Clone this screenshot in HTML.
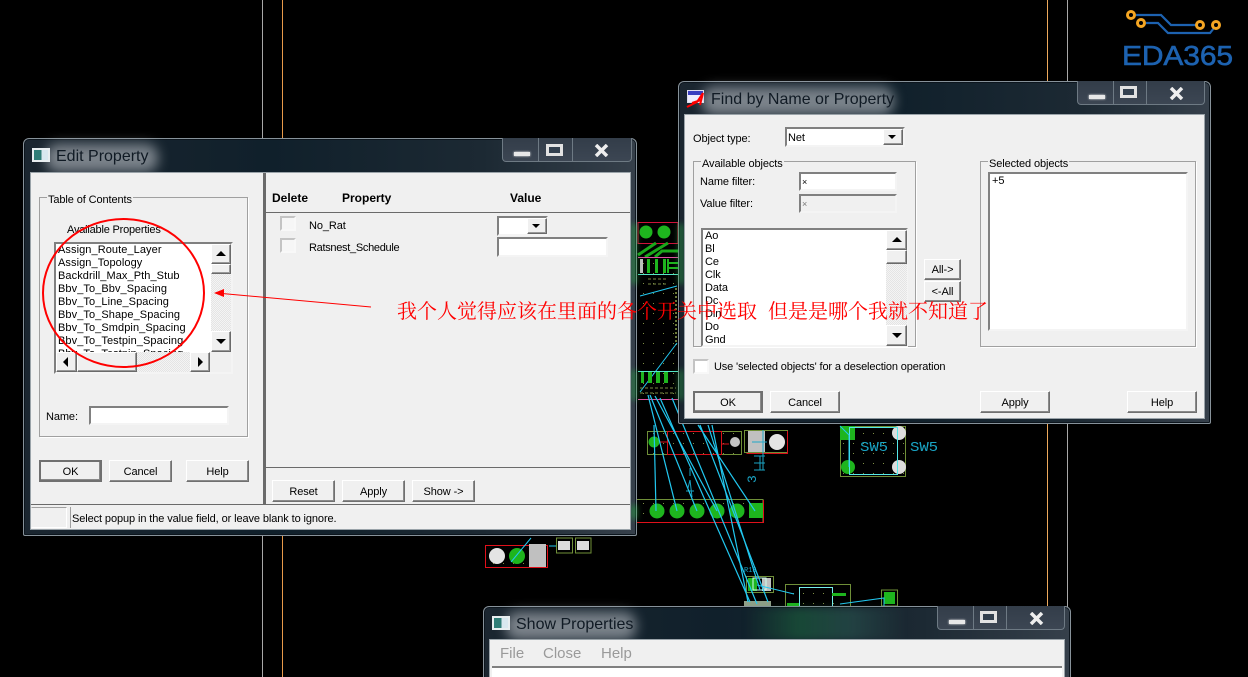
<!DOCTYPE html>
<html><head><meta charset="utf-8">
<style>
html,body{margin:0;padding:0;background:#000;width:1248px;height:677px;overflow:hidden}
#r{position:relative;width:1248px;height:677px;overflow:hidden;background:#000;font:11px/13px "Liberation Sans",sans-serif;color:#000;letter-spacing:-.1px}
#r div,#r svg{position:absolute;box-sizing:border-box}
.t{white-space:nowrap;height:13px;margin-top:1px}
.win{border:1px solid #87929a;border-radius:6px 6px 2px 2px;background:linear-gradient(90deg,#1b2630,#10202b 40%,#1c2933 75%,#36404b);box-shadow:inset 0 0 0 1px #0c151d}
.client{background:#f0f0f0;outline:1px solid #9aa3a9;box-shadow:0 0 0 1px #222b33}
.tb{border:1px solid #6e7a84;border-top:0;border-radius:0 0 4px 4px;background:linear-gradient(#333d49,#3c4653)}
.sep{width:1px;background:#6e7a84;top:0;bottom:0}
.mn{background:#e8e8e8;height:4px;box-shadow:0 0 2px #fff}
.mx{border:3px solid #e2e2e2;background:#33404e}
.glow{background:rgba(205,210,215,.55);filter:blur(6px);border-radius:12px}
.title{font:16px/20px "Liberation Sans",sans-serif;color:#101a24;white-space:nowrap;letter-spacing:0}
.ic{width:18px;height:14px;background:linear-gradient(90deg,#2f7d77 0 55%,#d8e8ef 55%);border:2px solid #e8eef0}
.btn{background:#f0f0f0;border:1px solid;border-color:#fff #707070 #707070 #fff;box-shadow:inset -1px -1px 0 #8a8a8a;text-align:center;line-height:22px;white-space:nowrap}
.dft{border:2px solid #707070;line-height:20px}
.ins{background:#fff;border:2px solid;border-color:#808080 #f4f4f4 #f4f4f4 #808080}
.chk{background:#fff;border:2px solid;border-color:#c4c4c4 #f8f8f8 #f8f8f8 #c4c4c4}
.grp{border:1px solid #a0a0a0;box-shadow:1px 1px 0 #fff}
.lab{background:#f0f0f0;padding:0 1px}
.sb{background:#f0f0f0;border:1px solid;border-color:#fff #6a6a6a #6a6a6a #fff;box-shadow:inset -1px -1px 0 #999}
.tr{background:repeating-conic-gradient(#f4f4f4 0 25%,#e4e4e4 0 50%) 0 0/2px 2px}
.up{width:0;height:0;border:5px solid transparent;border-top:0;border-bottom:5px solid #000}
.dn{width:0;height:0;border:5px solid transparent;border-bottom:0;border-top:5px solid #000}
.lf{width:0;height:0;border:5px solid transparent;border-left:0;border-right:5px solid #000}
.rt{width:0;height:0;border:5px solid transparent;border-right:0;border-left:5px solid #000}
.b{font-weight:bold;font-size:12px;margin-top:0;letter-spacing:0}
.m{font-size:15px;line-height:17px;height:17px;color:#9a9a9a;margin-top:0;letter-spacing:0}
.cn{font:20px/24px "Noto Serif CJK SC","Noto Sans CJK SC",serif;color:#f00;white-space:nowrap;letter-spacing:0}
.gl{filter:blur(3px)}
</style></head><body><div id="r">

<svg width="1248" height="677" style="left:0;top:0" viewBox="0 0 1248 677">
<defs><pattern id="d" width="10" height="10" patternUnits="userSpaceOnUse"><rect x="3" y="3" width="1" height="1" fill="#7f8f44"/></pattern></defs>
<g fill="none" stroke-width="1">
<path d="M262.5 0V677M1067.5 0V677" stroke="#a8a8a8"/>
<path d="M282.5 0V677" stroke="#e89a4a"/><path d="M1047.5 0V677" stroke="#eda95c"/>
</g>
<!-- logo -->
<g fill="none" stroke="#1d62b0" stroke-width="2.200">
<path d="M1136 15H1161L1171 25H1196"/><path d="M1146 23H1158L1168 33H1210L1214 28"/>
</g>
<g fill="#000" stroke="#f5a623" stroke-width="3">
<circle cx="1131" cy="15" r="3.500"/><circle cx="1141" cy="23" r="3.500"/><circle cx="1200" cy="25" r="3.500"/><circle cx="1216" cy="25" r="3.500"/>
</g>
<text x="1122" y="65" font-family="Liberation Sans" font-size="28" fill="#1d62b0" stroke="#1d62b0" stroke-width=".6" textLength="111" lengthAdjust="spacingAndGlyphs">EDA365</text>

<!-- strip -->
<rect x="638" y="262" width="40" height="135" fill="url(#d)"/>
<rect x="638" y="222.500" width="40" height="21" fill="none" stroke="#d0103a"/>
<circle cx="646" cy="232" r="6.500" fill="#1eb51e"/><circle cx="664" cy="232" r="6.500" fill="#1eb51e"/>
<path d="M638 255L656 243M645 257L668 243M655 257L662 251H678" stroke="#1aa81a" stroke-width="3" fill="none"/>
<path d="M638 257.500H678" stroke="#e050a0"/>
<rect x="640" y="259" width="3" height="14" fill="#c0c0c0"/>
<rect x="647" y="259" width="3" height="14" fill="#1eb51e"/><rect x="655" y="259" width="3" height="14" fill="#1eb51e"/><rect x="663" y="259" width="3" height="14" fill="#1eb51e"/><path d="M668 259V273M668 263H678M668 268H678" stroke="#1eb51e" stroke-width="2"/>
<path d="M638 274.500H678" stroke="#55e8c8"/>
<path d="M648 279H668M648 284H668" stroke="#7a8a44" stroke-dasharray="3 2"/>
<path d="M640 296L677 286" stroke="#22c8f0"/>
<path d="M676 288V345" stroke="#6a7a38" stroke-dasharray="2 2" stroke-width="2"/>
<path d="M677 343L640 392" stroke="#22c8f0"/>
<path d="M638 371.500H678" stroke="#55e8c8"/>
<g fill="#1eb51e"><rect x="641" y="372" width="3" height="11"/><rect x="648" y="372" width="4" height="11"/><rect x="656" y="372" width="4" height="11"/><rect x="664" y="372" width="4" height="11"/></g>
<path d="M640 388H676M640 393H676" stroke="#7a8a44" stroke-dasharray="3 2"/>
<path d="M638 399.500H678" stroke="#e050a0"/>

<!-- block A -->
<rect x="647.500" y="431.500" width="94" height="23" fill="url(#d)" stroke="#6f8f38"/>
<rect x="667.500" y="431.500" width="54" height="23" fill="none" stroke="#d8101a"/>
<circle cx="654" cy="442" r="5.500" fill="#1eb51e"/><circle cx="735" cy="442" r="5" fill="#c4c4c4"/>
<path d="M660 442H667M722 444H729" stroke="#d8101a"/>
<rect x="744.500" y="430.500" width="43" height="22" fill="none" stroke="#6f8f38"/><path d="M746.500 453.500H787.500V431" fill="none" stroke="#d8101a"/>
<rect x="748" y="431" width="17" height="21" fill="#c0c0c0"/><circle cx="777" cy="442" r="8" fill="#e4e4e4"/>
<path d="M752 442H767M763 430V470" stroke="#22a8c8"/>
<!-- bar -->
<rect x="630" y="499.500" width="133" height="23" fill="url(#d)" stroke="#6f8f38"/><path d="M630 522.500H763.500V500" fill="none" stroke="#e0101a"/>
<g fill="#1eb51e"><circle cx="657" cy="511" r="7.500"/><circle cx="677" cy="511" r="7.500"/><circle cx="697" cy="511" r="7.500"/><circle cx="717" cy="511" r="7.500"/><circle cx="737" cy="511" r="7.500"/><rect x="749" y="503" width="14" height="15"/></g>
<!-- left lower -->
<rect x="485.500" y="545.500" width="62" height="22" fill="url(#d)" stroke="#e0101a"/>
<circle cx="497" cy="556" r="8" fill="#e4e4e4"/><circle cx="517" cy="556" r="8" fill="#1eb51e"/><rect x="529" y="544" width="17" height="23" fill="#c0c0c0"/>
<rect x="556.500" y="538" width="16" height="15" fill="none" stroke="#6f8f38"/><rect x="575.500" y="538" width="15.500" height="15" fill="none" stroke="#6f8f38"/>
<rect x="558" y="541" width="12" height="9" fill="#ddd"/><rect x="577" y="541" width="12" height="9" fill="#ddd"/>
<path d="M511 562L531 538M549 546H556" stroke="#22c8f0"/>
<!-- SW5 -->
<rect x="840.500" y="426.500" width="65" height="50" fill="url(#d)" stroke="#6f8f38"/>
<rect x="840" y="426" width="15" height="14" fill="#1eb51e"/><circle cx="848" cy="467" r="7" fill="#1eb51e"/><circle cx="899" cy="433" r="7" fill="#ddd"/><circle cx="899" cy="467" r="7" fill="#ddd"/>
<rect x="849.500" y="427.500" width="48" height="47" fill="none" stroke="#55e8e8"/>
<path d="M840 426L849 435V467" stroke="#22c8f0" fill="none"/>
<text x="860" y="451" font-family="Liberation Mono" font-size="14" fill="#1aa4c4" textLength="28" lengthAdjust="spacingAndGlyphs">SW5</text>
<text x="910" y="451" font-family="Liberation Mono" font-size="14" fill="#1aa4c4" textLength="28" lengthAdjust="spacingAndGlyphs">SW5</text>
<text x="0" y="0" transform="translate(756,483) rotate(-90)" font-family="Liberation Mono" font-size="13" fill="#1aa4c4">3</text>
<path d="M754 456H765M754 463H765M754 470H765M760 456V470" stroke="#1aa4c4" fill="none"/>
<path d="M688 488L690 480M690 480L692 497M686 491H694M690 468V476" stroke="#1aa4c4" fill="none"/>
<!-- R13 etc -->
<text x="744" y="572" font-family="Liberation Mono" font-size="7" fill="#1aa4c4">R13</text>
<rect x="746.500" y="576.500" width="27" height="16" fill="none" stroke="#6f8f38"/><rect x="748" y="578" width="9" height="13" fill="#1eb51e"/><rect x="762" y="578" width="9" height="13" fill="#c0c0c0"/>
<rect x="753" y="578" width="13" height="12" fill="none" stroke="#cfe"/>
<rect x="785.500" y="584.500" width="65" height="22" fill="url(#d)" stroke="#6f8f38"/><rect x="799.500" y="587.500" width="33" height="19" fill="none" stroke="#7ee"/>
<rect x="832" y="593" width="14" height="3" fill="#1eb51e"/><rect x="787" y="603" width="12" height="3" fill="#1eb51e"/>
<rect x="881.500" y="590" width="16" height="16" fill="none" stroke="#6f8f38"/><rect x="884" y="592" width="11" height="12" fill="#1eb51e"/>
<path d="M757 585L794 594M840 604L884 598V606" stroke="#22c8f0" fill="none"/>
<rect x="744" y="601" width="27" height="5" fill="#8f9f88"/>
<!-- ratlines -->
<g stroke="#22c8f0" stroke-width="1.200" fill="none">
<path d="M654 425L656 511"/><path d="M648 395L677 511"/><path d="M650 395L697 511"/><path d="M655 396L717 511"/>
<path d="M660 398L750 602"/><path d="M672 398L757 604"/><path d="M700 425L768 602"/><path d="M708 425L760 590"/><path d="M712 425L748 602"/><path d="M698 425L755 511"/>
</g>
</svg>

<!-- EDIT PROPERTY -->
<div class="win" style="left:23px;top:138px;width:614px;height:398px"></div>
<div class="gl" style="left:631px;top:224px;width:6px;height:60px;background:rgba(40,170,70,.55)"></div>
<div class="gl" style="left:631px;top:370px;width:6px;height:30px;background:rgba(40,170,70,.5)"></div>
<div class="gl" style="left:631px;top:505px;width:6px;height:14px;background:rgba(40,170,70,.6)"></div>
<div class="glow" style="left:46px;top:144px;width:112px;height:28px"></div>
<div class="ic" style="left:32px;top:148px"></div>
<div class="title" style="left:56px;top:147px">Edit Property</div>
<div class="tb" style="left:502px;top:138px;width:130px;height:24px">
<div class="sep" style="left:35px"></div><div class="sep" style="left:69px"></div>
<div class="mn" style="left:11px;top:14px;width:16px"></div>
<div class="mx" style="left:43px;top:6px;width:17px;height:12px"></div>
<svg style="left:91px;top:6px" width="15" height="13" viewBox="0 0 15 13"><path d="M2 1L13 12M13 1L2 12" stroke="#eee" stroke-width="3.500" fill="none"/></svg>
</div>
<div class="client" style="left:31px;top:173px;width:599px;height:356px"></div>
<div style="left:263px;top:173px;width:3px;height:332px;background:#6a6a6a"></div>
<div style="left:266px;top:212px;width:364px;height:1px;background:#6a6a6a"></div>
<div style="left:265px;top:467px;width:365px;height:1px;background:#6a6a6a"></div>
<div style="left:31px;top:504px;width:599px;height:1px;background:#6a6a6a"></div>
<div style="left:31px;top:507px;width:36px;height:21px;border:1px solid;border-color:#a0a0a0 #fff #fff #f0f0f0"></div>
<div style="left:70px;top:507px;width:560px;height:21px;border-left:1px solid #a0a0a0"></div>
<div class="t" style="left:72px;top:512px">Select popup in the value field, or leave blank to ignore.</div>

<div class="grp" style="left:39px;top:197px;width:209px;height:240px"></div>
<div class="t lab" style="left:47px;top:193px">Table of Contents</div>
<div class="t" style="left:67px;top:223px;letter-spacing:-.2px">Available Properties</div>
<div class="ins" style="left:54px;top:242px;width:179px;height:132px"></div>
<div class="t" style="left:58px;top:243px;line-height:13px;height:110px;overflow:hidden;letter-spacing:.08px">Assign_Route_Layer<br>Assign_Topology<br>Backdrill_Max_Pth_Stub<br>Bbv_To_Bbv_Spacing<br>Bbv_To_Line_Spacing<br>Bbv_To_Shape_Spacing<br>Bbv_To_Smdpin_Spacing<br>Bbv_To_Testpin_Spacing<br>Bbv_To_Testpin_Spacing</div>
<div class="tr" style="left:211px;top:244px;width:20px;height:108px"></div>
<div class="sb" style="left:211px;top:244px;width:20px;height:20px"><div class="up" style="left:4px;top:6px"></div></div>
<div class="sb" style="left:211px;top:264px;width:20px;height:10px"></div>
<div class="sb" style="left:211px;top:331px;width:20px;height:21px"><div class="dn" style="left:4px;top:7px"></div></div>
<div class="tr" style="left:56px;top:352px;width:155px;height:20px"></div>
<div class="sb" style="left:56px;top:352px;width:21px;height:20px"><div class="lf" style="left:6px;top:4px"></div></div>
<div class="sb" style="left:77px;top:352px;width:60px;height:20px"></div>
<div class="sb" style="left:190px;top:352px;width:20px;height:20px"><div class="rt" style="left:7px;top:4px"></div></div>
<div style="left:210px;top:352px;width:21px;height:20px;background:#f0f0f0"></div>
<div class="t" style="left:46px;top:410px">Name:</div>
<div class="ins" style="left:89px;top:406px;width:140px;height:19px"></div>
<div class="btn dft" style="left:39px;top:460px;width:63px;height:22px">OK</div>
<div class="btn" style="left:109px;top:460px;width:63px;height:22px">Cancel</div>
<div class="btn" style="left:186px;top:460px;width:63px;height:22px">Help</div>
<div class="t b" style="left:272px;top:192px">Delete</div>
<div class="t b" style="left:342px;top:192px">Property</div>
<div class="t b" style="left:510px;top:192px">Value</div>
<div class="chk" style="left:280px;top:216px;width:16px;height:15px;background:#f6f6f6"></div>
<div class="chk" style="left:280px;top:238px;width:16px;height:15px;background:#f6f6f6"></div>
<div class="t" style="left:309px;top:219px">No_Rat</div>
<div class="t" style="left:309px;top:241px;letter-spacing:-.3px">Ratsnest_Schedule</div>
<div class="ins" style="left:497px;top:216px;width:51px;height:20px"></div>
<div class="sb" style="left:527px;top:218px;width:20px;height:16px"><div class="dn" style="left:4px;top:5px;border-width:4px;border-bottom:0;border-top:4px solid #000"></div></div>
<div class="ins" style="left:497px;top:237px;width:111px;height:20px"></div>
<div class="btn" style="left:272px;top:480px;width:63px;height:22px">Reset</div>
<div class="btn" style="left:342px;top:480px;width:63px;height:22px">Apply</div>
<div class="btn" style="left:412px;top:480px;width:63px;height:22px">Show -&gt;</div>

<!-- FIND -->
<div class="win" style="left:678px;top:81px;width:533px;height:343px"></div>
<div class="gl" style="left:678px;top:224px;width:6px;height:60px;background:rgba(40,170,70,.5)"></div>
<div class="gl" style="left:678px;top:370px;width:6px;height:30px;background:rgba(40,170,70,.45)"></div>
<div class="glow" style="left:702px;top:87px;width:192px;height:28px"></div>
<div style="left:687px;top:90px;width:17px;height:13px;background:linear-gradient(#3a3fc0 0 35%,#eef 35%);border:1px solid #dde"></div>
<svg style="left:686px;top:92px" width="20" height="16" viewBox="0 0 20 16"><path d="M1 15L11 10L17 1L14 13M6 11L15 8" stroke="#f00" stroke-width="2" fill="none"/></svg>
<div class="title" style="left:711px;top:90px">Find by Name or Property</div>
<div class="tb" style="left:1077px;top:81px;width:128px;height:24px">
<div class="sep" style="left:35px"></div><div class="sep" style="left:68px"></div>
<div class="mn" style="left:11px;top:14px;width:16px"></div>
<div class="mx" style="left:42px;top:5px;width:17px;height:12px"></div>
<svg style="left:91px;top:6px" width="15" height="13" viewBox="0 0 15 13"><path d="M2 1L13 12M13 1L2 12" stroke="#eee" stroke-width="3.500" fill="none"/></svg>
</div>
<div class="client" style="left:685px;top:115px;width:519px;height:303px"></div>
<div class="t" style="left:693px;top:132px">Object type:</div>
<div class="ins" style="left:785px;top:127px;width:120px;height:20px"></div>
<div class="t" style="left:788px;top:131px">Net</div>
<div class="sb" style="left:883px;top:129px;width:20px;height:16px"><div class="dn" style="left:4px;top:5px;border-width:4px;border-bottom:0;border-top:4px solid #000"></div></div>
<div class="grp" style="left:693px;top:161px;width:223px;height:186px"></div>
<div class="t lab" style="left:701px;top:157px">Available objects</div>
<div class="t" style="left:700px;top:175px">Name filter:</div>
<div class="ins" style="left:799px;top:172px;width:98px;height:19px"></div>
<div class="t" style="left:802px;top:175px;font-size:9px">×</div>
<div class="t" style="left:700px;top:197px">Value filter:</div>
<div class="ins" style="left:799px;top:194px;width:98px;height:19px;background:#f0f0f0"></div>
<div class="t" style="left:802px;top:197px;font-size:9px;color:#777">×</div>
<div class="ins" style="left:701px;top:228px;width:207px;height:119px"></div>
<div class="t" style="left:705px;top:229px;height:116px;overflow:hidden">Ao<br>Bl<br>Ce<br>Clk<br>Data<br>Dc<br>Din<br>Do<br>Gnd</div>
<div class="tr" style="left:886px;top:230px;width:21px;height:116px"></div>
<div class="sb" style="left:886px;top:230px;width:21px;height:20px"><div class="up" style="left:5px;top:6px"></div></div>
<div class="sb" style="left:886px;top:250px;width:21px;height:14px"></div>
<div class="sb" style="left:886px;top:325px;width:21px;height:21px"><div class="dn" style="left:5px;top:7px"></div></div>
<div class="btn" style="left:924px;top:259px;width:37px;height:21px;line-height:21px">All-&gt;</div>
<div class="btn" style="left:924px;top:281px;width:37px;height:21px;line-height:21px">&lt;-All</div>
<div class="grp" style="left:980px;top:161px;width:216px;height:186px"></div>
<div class="t lab" style="left:988px;top:157px">Selected objects</div>
<div class="ins" style="left:988px;top:172px;width:200px;height:159px"></div>
<div class="t" style="left:992px;top:174px">+5</div>
<div class="chk" style="left:693px;top:359px;width:16px;height:15px"></div>
<div class="t" style="left:714px;top:360px;letter-spacing:-.14px">Use 'selected objects' for a deselection operation</div>
<div class="btn dft" style="left:693px;top:391px;width:70px;height:22px">OK</div>
<div class="btn" style="left:770px;top:391px;width:70px;height:22px">Cancel</div>
<div class="btn" style="left:980px;top:391px;width:70px;height:22px">Apply</div>
<div class="btn" style="left:1127px;top:391px;width:70px;height:22px">Help</div>

<!-- SHOW PROPERTIES -->
<div class="win" style="left:483px;top:606px;width:588px;height:80px"></div>
<div style="left:745px;top:608px;width:160px;height:32px;background:linear-gradient(90deg,transparent,rgba(30,140,70,.35),rgba(60,130,110,.3),transparent);filter:blur(4px)"></div>
<div class="glow" style="left:506px;top:612px;width:130px;height:28px"></div>
<div class="ic" style="left:492px;top:616px"></div>
<div class="title" style="left:516px;top:615px">Show Properties</div>
<div class="tb" style="left:937px;top:606px;width:128px;height:24px">
<div class="sep" style="left:35px"></div><div class="sep" style="left:68px"></div>
<div class="mn" style="left:11px;top:14px;width:16px"></div>
<div class="mx" style="left:42px;top:5px;width:17px;height:12px"></div>
<svg style="left:91px;top:6px" width="15" height="13" viewBox="0 0 15 13"><path d="M2 1L13 12M13 1L2 12" stroke="#eee" stroke-width="3.500" fill="none"/></svg>
</div>
<div class="client" style="left:490px;top:640px;width:574px;height:40px"></div>
<div style="left:492px;top:666px;width:570px;height:14px;background:#fff;border-top:2px solid #808080"></div>
<div class="t m" style="left:500px;top:645px">File</div>
<div class="t m" style="left:543px;top:645px">Close</div>
<div class="t m" style="left:601px;top:645px">Help</div>

<!-- annotations -->
<svg width="1248" height="677" style="left:0;top:0" viewBox="0 0 1248 677">
<ellipse cx="123.500" cy="293" rx="80.500" ry="74" fill="none" stroke="#f00" stroke-width="2"/>
<path d="M371 307L222 293.500" stroke="#f00" fill="none"/>
<path d="M214 293L224 289L224 297Z" fill="#f00"/>
</svg>
<div class="cn" style="left:397px;top:298px">我个人觉得应该在里面的各个开关中选取</div>
<div class="cn" style="left:768px;top:298px">但是是哪个我就不知道了</div>
</div></body></html>
